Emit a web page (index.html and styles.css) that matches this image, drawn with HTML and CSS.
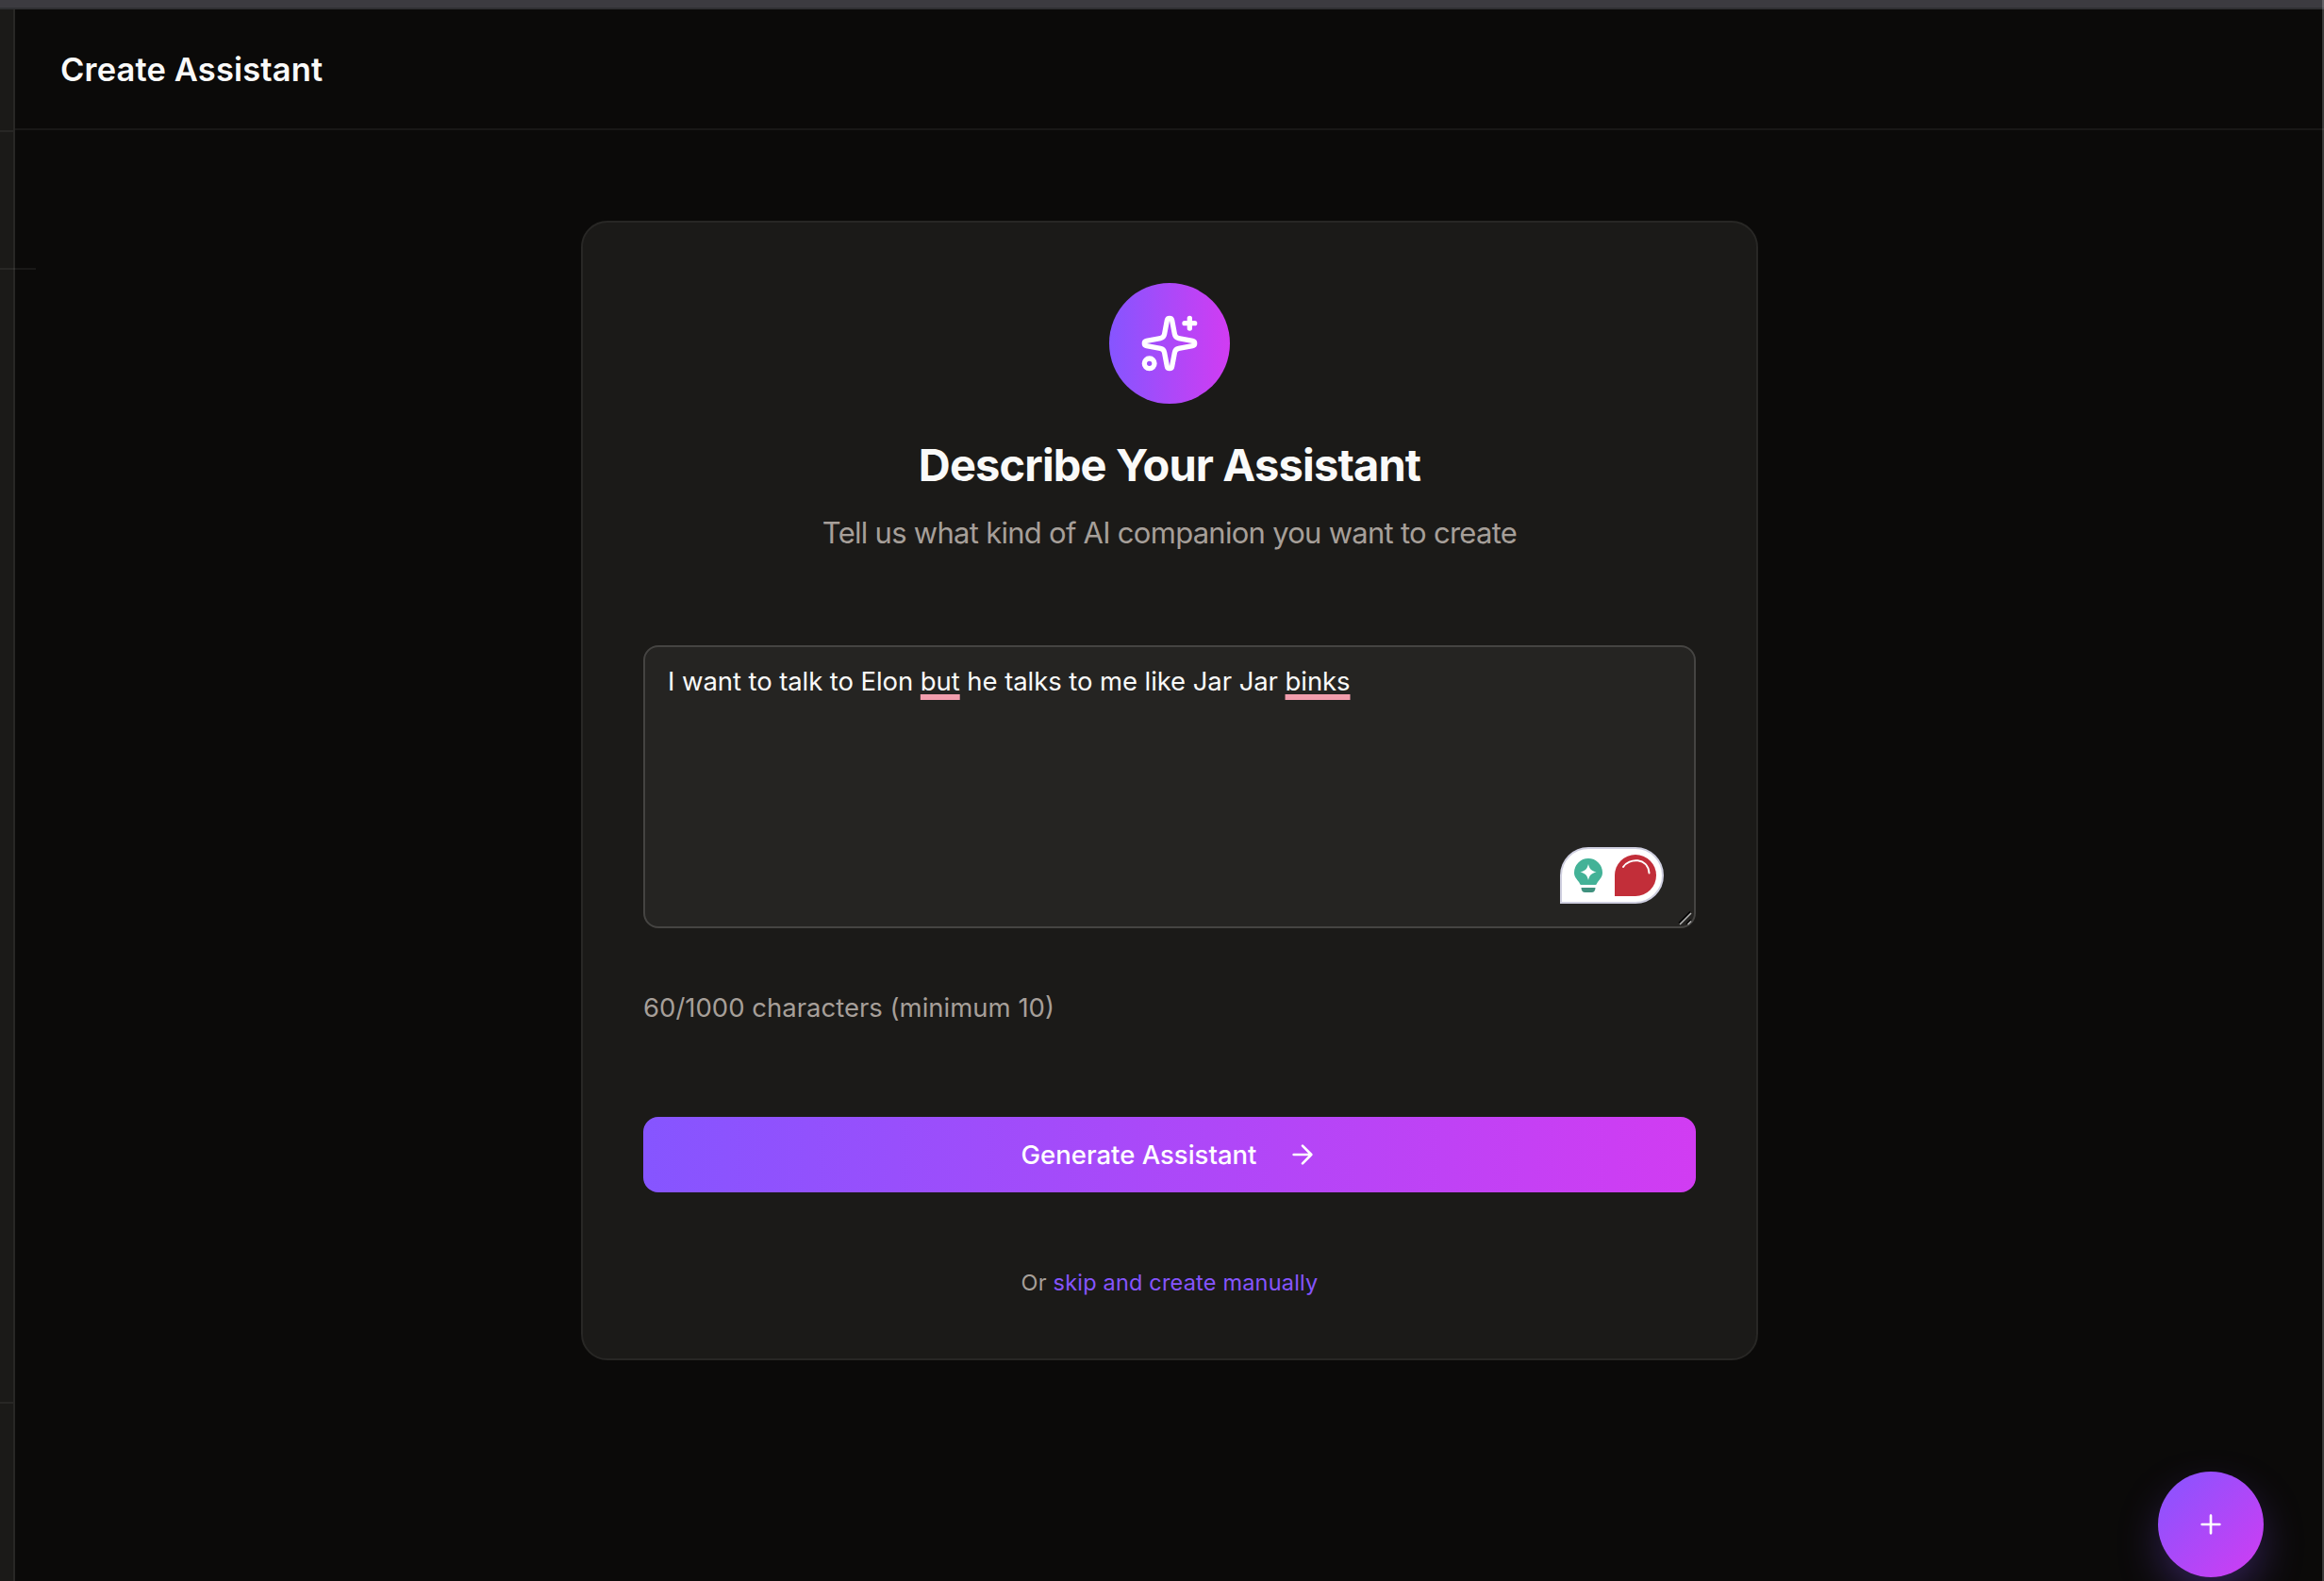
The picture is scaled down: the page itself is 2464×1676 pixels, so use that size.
FILE: index.html
```html
<!DOCTYPE html>
<html lang="en">
<head>
    <meta charset="UTF-8">
    <meta name="viewport" content="width=device-width, initial-scale=1.0">
    <title>Create Assistant</title>
    <link rel="stylesheet" href="styles.css">
</head>
<body>

    <div class="top-strip"></div>

    <div class="app">
        <!-- Sidebar (collapsed) -->
        <aside class="sidebar">
            <div class="sidebar-head"></div>
            <div class="sidebar-body"></div>
            <div class="sidebar-foot"></div>
        </aside>

        <main class="main">
            <header class="header">
                <h1>Create Assistant</h1>
            </header>

            <!-- Assistant Form -->
            <section class="card">
                <div class="card-icon">
                    <svg viewBox="0 0 24 24" width="64" height="64" class="icon">
                        <path d="M11.017 2.814a1 1 0 0 1 1.966 0l1.051 5.558a2 2 0 0 0 1.594 1.594l5.558 1.051a1 1 0 0 1 0 1.966l-5.558 1.051a2 2 0 0 0-1.594 1.594l-1.051 5.558a1 1 0 0 1-1.966 0l-1.051-5.558a2 2 0 0 0-1.594-1.594l-5.558-1.051a1 1 0 0 1 0-1.966l5.558-1.051a2 2 0 0 0 1.594-1.594z"/>
                        <path d="M20 2v4M22 4h-4"/>
                        <circle cx="4" cy="20" r="2"/>
                    </svg>
                </div>
                <h2>Describe Your Assistant</h2>
                <p class="subtitle">Tell us what kind of AI companion you want to create</p>

                <div class="prompt">
                    <div class="prompt-text" contenteditable="true" spellcheck="false">I want to talk to Elon <span class="typo">but</span> he talks to me like Jar Jar <span class="typo">binks</span></div>
                    <div class="checker">
                        <svg viewBox="0 0 32 38" width="32" height="38">
                            <path class="bulb" d="M16 1a15 15 0 0 1 15 15c0 5-3 7-5 10-1 1.500-1 3-2.500 3h-15C7 29 7 27.500 6 26c-2-3-5-5-5-10A15 15 0 0 1 16 1z"/>
                            <path class="bulb-base" d="M8.500 32h15c0 3-1.500 5-4 5h-7c-2.500 0-4-2-4-5z"/>
                            <path class="bulb-star" d="M16 7c1.500 5.500 3 7 8.500 8.500C19 17 17.500 18.500 16 24c-1.500-5.500-3-7-8.500-8.500C13 14 14.500 12.500 16 7z"/>
                        </svg>
                        <div class="checker-badge">
                            <svg viewBox="0 0 44 44" width="44" height="44">
                                <path d="M9 13C15 3.500 35 2.500 36.500 19.500"/>
                            </svg>
                        </div>
                    </div>
                    <svg class="grip" viewBox="0 0 16 16" width="16" height="16">
                        <path class="grip-shade" d="M1 12.500L13 .5M9 13.500L13.500 9"/>
                        <path d="M2 14L14 2M10.500 14L14 10.500"/>
                    </svg>
                </div>

                <p class="counter">60/1000 characters (minimum 10)</p>

                <button type="button" class="btn">
                    Generate Assistant
                    <svg viewBox="0 0 24 24" width="32" height="32" class="icon">
                        <path d="M5 12h14M12 5l7 7-7 7"/>
                    </svg>
                </button>

                <p class="skip">Or <a href="#">skip and create manually</a></p>
            </section>
        </main>
    </div>

    <button type="button" class="fab">
        <svg viewBox="0 0 24 24" width="32" height="32" class="icon">
            <path d="M5 12h14M12 5v14"/>
        </svg>
    </button>
    <div class="hover-line"></div>
    <div class="edge"></div>

</body>
</html>
```
FILE: styles.css
```css
:root {
    --background: #0b0a09;
    --surface: #1b1a18;
    --border: #282725;
    --text: #fafaf9;
    --muted: #a69f99;
    --violet: #8655ff;
    --pink: #d13cf2;
}

* {
    margin: 0;
    padding: 0;
    box-sizing: border-box;
    font-family: Inter, 'Liberation Sans', sans-serif;
}

body {
    background: var(--background);
    color: var(--text);
    height: 1676px;
    overflow: hidden;
    position: relative;
}

.icon {
    display: block;
    fill: none;
    stroke: #fff;
    stroke-width: 2;
    stroke-linecap: round;
    stroke-linejoin: round;
}

.top-strip {
    height: 10px;
    background: #3c3b40;
    border-bottom: 2px solid #2f2f32;
}

.app {
    display: flex;
    height: 1666px;
}

/* Sidebar */
.sidebar {
    width: 16px;
    flex-shrink: 0;
    display: flex;
    flex-direction: column;
    background: var(--surface);
    border-right: 2px solid var(--border);
}

.sidebar-head {
    height: 130px;
    border-bottom: 2px solid var(--border);
}

.sidebar-body {
    flex: 1;
}

.sidebar-foot {
    height: 190px;
    border-top: 2px solid var(--border);
}

.main {
    flex: 1;
    display: flex;
    flex-direction: column;
    align-items: center;
}

.header {
    width: 100%;
    height: 128px;
    padding-left: 48px;
    display: flex;
    align-items: center;
    border-bottom: 2px solid #191817;
}

h1 {
    font-size: 34.5px;
    font-weight: 600;
    letter-spacing: 0.14px;
}

/* Card */
.card {
    width: 1248px;
    margin-top: 96px;
    padding: 64px;
    background: var(--surface);
    border: 2px solid var(--border);
    border-radius: 28px;
    text-align: center;
}

.card-icon {
    width: 128px;
    height: 128px;
    margin: 0 auto 32px;
    display: flex;
    align-items: center;
    justify-content: center;
    border-radius: 50%;
    background: linear-gradient(90deg, var(--violet), var(--pink));
}

h2 {
    font-size: 47px;
    font-weight: 700;
    line-height: 66px;
    letter-spacing: -0.85px;
    margin-bottom: 16px;
}

.subtitle {
    color: var(--muted);
    font-size: 31px;
    line-height: 46px;
    letter-spacing: -0.73px;
    margin-bottom: 96px;
}

.prompt {
    position: relative;
    height: 300px;
    padding: 16px 24px;
    background: #252422;
    border: 2px solid #454442;
    border-radius: 16px;
    text-align: left;
    margin-bottom: 64px;
}

.prompt-text {
    font-size: 27.5px;
    line-height: 40px;
    letter-spacing: -0.08px;
    outline: none;
}

.typo {
    text-decoration: underline #f29dad 6px;
    text-underline-offset: 4px;
    text-decoration-skip-ink: none;
}

/* Writing checker pill */
.checker {
    position: absolute;
    right: 32px;
    bottom: 24px;
    width: 110px;
    height: 60px;
    padding: 0 6px 0 12px;
    display: flex;
    align-items: center;
    justify-content: space-between;
    background: #fff;
    border: 2px solid #cfcfe0;
    border-radius: 30px 30px 30px 0;
}

.bulb {
    fill: #43b297;
}

.bulb-base {
    fill: #3f917e;
}

.bulb-star {
    fill: #fff;
}

.checker-badge {
    width: 44px;
    height: 44px;
    background: #c22e39;
    border-radius: 22px 22px 22px 0;
}

.checker-badge path {
    fill: none;
    stroke: #fff;
    stroke-width: 2;
    stroke-linecap: round;
}

.grip {
    position: absolute;
    right: 1px;
    bottom: 0;
    fill: none;
    stroke: #b5b5b4;
    stroke-width: 1.5;
}

.grip-shade {
    stroke: #000;
}

.counter {
    color: var(--muted);
    font-size: 27.5px;
    line-height: 40px;
    text-align: left;
    margin-bottom: 96px;
}

.btn {
    width: 100%;
    height: 80px;
    display: flex;
    align-items: center;
    justify-content: center;
    gap: 33px;
    background: linear-gradient(90deg, var(--violet), var(--pink));
    border: none;
    border-radius: 16px;
    color: #fff;
    font-size: 27.5px;
    font-weight: 500;
    cursor: pointer;
    margin-bottom: 80px;
}

.skip {
    color: var(--muted);
    font-size: 23.5px;
    line-height: 32px;
    letter-spacing: 0.19px;
}

.skip a {
    color: var(--violet);
    text-decoration: none;
}

/* Floating button */
.fab {
    position: absolute;
    right: 64px;
    bottom: 4px;
    width: 112px;
    height: 112px;
    display: flex;
    align-items: center;
    justify-content: center;
    background: linear-gradient(135deg, var(--violet), var(--pink));
    border: none;
    border-radius: 50%;
    box-shadow: 0 20px 50px -8px rgba(134, 85, 255, 0.4);
    cursor: pointer;
}

.hover-line {
    position: absolute;
    left: 0;
    top: 284px;
    width: 38px;
    height: 2px;
    background: rgba(255, 255, 255, 0.06);
}

.edge {
    position: absolute;
    right: 0;
    top: 0;
    width: 2px;
    height: 100%;
    background: rgba(255, 255, 255, 0.2);
}
```
